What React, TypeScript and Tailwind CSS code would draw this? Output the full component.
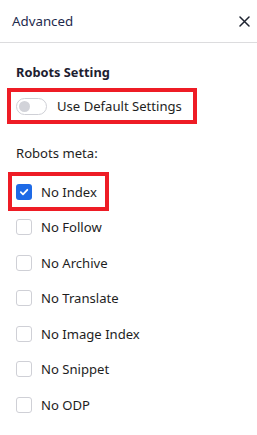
import React from "react";

const items = [
  { label: "No Index", checked: true },
  { label: "No Follow", checked: false },
  { label: "No Archive", checked: false },
  { label: "No Translate", checked: false },
  { label: "No Image Index", checked: false },
  { label: "No Snippet", checked: false },
  { label: "No ODP", checked: false },
];

function Box({ checked }: { checked: boolean }) {
  if (checked) {
    return (
      <span className="flex h-[16px] w-[16px] shrink-0 items-center justify-center rounded-[3px] bg-[#1e6ae6]">
        <svg width="10" height="10" viewBox="0 0 10 10" fill="none">
          <path d="M1.8 5.2 L4 7.3 L8.3 2.8" stroke="white" strokeWidth="1.8" strokeLinecap="round" strokeLinejoin="round" />
        </svg>
      </span>
    );
  }
  return <span className="h-[16px] w-[16px] shrink-0 rounded-[3px] border border-[#cfd0d6] bg-white" />;
}

export default function App() {
  return (
    <div className="h-[435px] w-[257px] bg-white text-[#1e1e1e]" style={{ fontFamily: '"Noto Sans", "Open Sans", sans-serif' }}>
      <div className="flex h-[43px] items-center justify-between border-b border-[#dcdcde] pl-[12px] pr-[6px]">
        <span className="text-[13.3px] leading-[20px] text-[#1d2a4d]">Advanced</span>
        <svg width="11" height="11" viewBox="0 0 11 11" className="mr-[1px]">
          <path d="M1 1 L10 10 M10 1 L1 10" stroke="#1e2330" strokeWidth="1.5" strokeLinecap="round" />
        </svg>
      </div>
      <div className="px-[16px]">
        <div className="mt-[19px] text-[12.8px] font-bold leading-[20px] text-[#1d2030]">Robots Setting</div>
        <div className="ml-[-9px] mt-[6px] flex h-[36px] w-[190px] items-center border-4 border-[#ee1c25] pl-[5px]">
          <span className="flex h-[17px] w-[31px] items-center rounded-full border border-[#cfd0d6] bg-white pl-[2px]">
            <span className="h-[11px] w-[11px] rounded-full bg-[#d2d3d9]" />
          </span>
          <span className="ml-[10px] text-[13.1px] leading-[20px]">Use Default Settings</span>
        </div>
        <div className="mt-[19px] text-[13.1px] leading-[20px]">Robots meta:</div>
        <div className="mt-[11px] flex flex-col">
          {items.map((it) =>
            it.checked ? (
              <div key={it.label} className="flex h-[35.5px] items-center">
                <div className="ml-[-8px] flex h-[39px] w-[101px] shrink-0 items-center gap-[9px] border-4 border-[#ee1c25] pl-[4px]">
                  <Box checked />
                  <span className="text-[13.1px] leading-[20px]">{it.label}</span>
                </div>
              </div>
            ) : (
              <div key={it.label} className="flex h-[35.5px] items-center gap-[9px]">
                <Box checked={false} />
                <span className="text-[13.1px] leading-[20px]">{it.label}</span>
              </div>
            )
          )}
        </div>
      </div>
    </div>
  );
}
